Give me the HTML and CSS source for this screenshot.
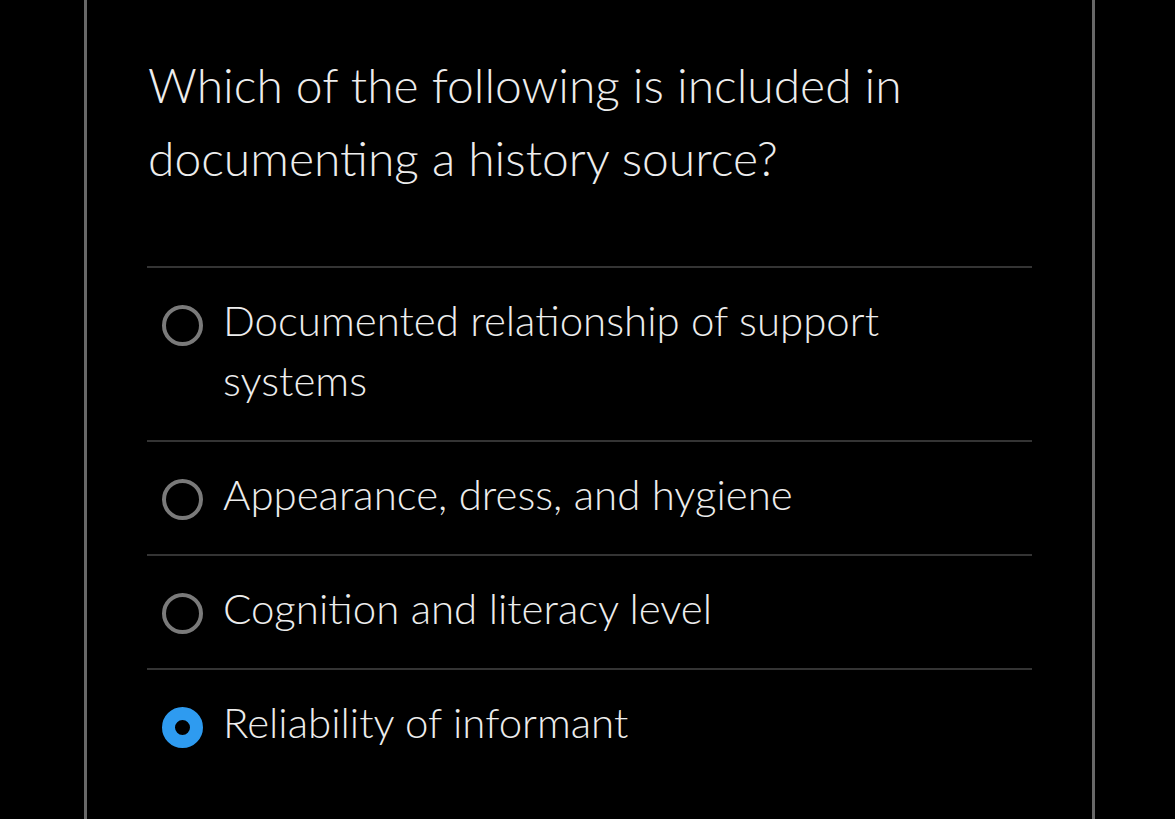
FILE: index.html
```html
<!DOCTYPE html>
<html lang="en">
<head>
<meta charset="utf-8">
<link rel="stylesheet" href="styles.css">
</head>
<body>
<div class="panel">
  <h1 class="question">Which of the following is included in documenting a history source?</h1>
  <div class="options">
    <div class="option">
      <span class="radio"></span>
      <span class="label">Documented relationship of support systems</span>
    </div>
    <div class="option">
      <span class="radio"></span>
      <span class="label">Appearance, dress, and hygiene</span>
    </div>
    <div class="option">
      <span class="radio"></span>
      <span class="label">Cognition and literacy level</span>
    </div>
    <div class="option">
      <span class="radio selected"></span>
      <span class="label">Reliability of informant</span>
    </div>
  </div>
</div>
</body>
</html>
```
FILE: styles.css
```css
html, body {
  margin: 0;
  padding: 0;
  background: #000;
  height: 100%;
}
body {
  font-family: Lato, "Open Sans", sans-serif;
  font-weight: 300;
  color: #ededed;
  overflow: hidden;
}
.panel {
  box-sizing: border-box;
  margin-left: 84px;
  width: 1011px;
  min-height: 100%;
  border-left: 3px solid #686868;
  border-right: 3px solid #686868;
  padding: 48px 60px 0 60px;
}
.question {
  margin: 0;
  font-size: 48px;
  font-weight: 300;
  line-height: 73px;
  padding-left: 1px;
  max-width: 800px;
}
.options {
  margin-top: 72px;
}
.option {
  display: flex;
  align-items: flex-start;
  gap: 20px;
  border-top: 2px solid #343434;
  padding: 22px 0 30px 15px;
}
.radio {
  flex: none;
  box-sizing: border-box;
  width: 41px;
  height: 41px;
  margin-top: 15px;
  border-radius: 50%;
  border: 4px solid #7a7a7a;
}
.radio.selected {
  border: 13.5px solid #2e9bf0;
  background: #000;
}
.label {
  font-size: 42px;
  line-height: 60px;
  max-width: 700px;
}
```
